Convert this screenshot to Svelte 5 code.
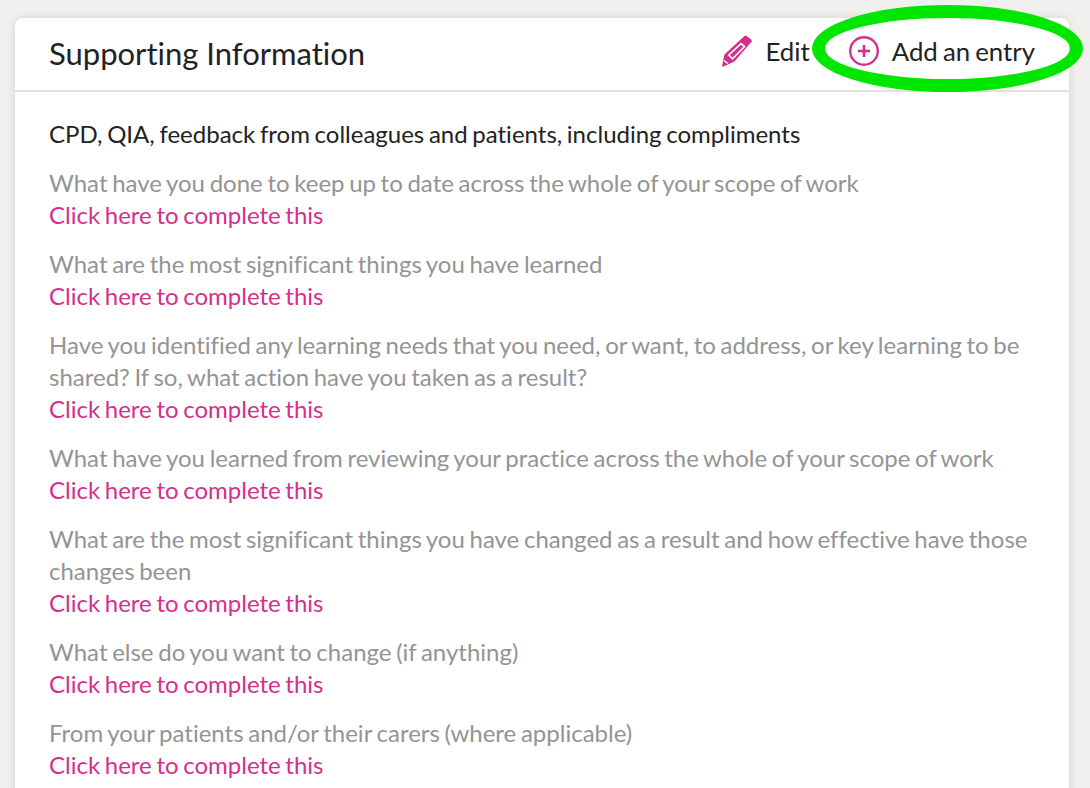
<script>
    const sections = [
        ['What have you done to keep up to date across the whole of your scope of work'],
        ['What are the most significant things you have learned'],
        ['Have you identified any learning needs that you need, or want, to address, or key learning to be shared? If so, what action have you taken as a result?'],
        ['What have you learned from reviewing your practice across the whole of your scope of work'],
        ['What are the most significant things you have changed as a result and how effective have those changes been'],
        ['What else do you want to change (if anything)'],
        ['From your patients and/or their carers (where applicable)']
    ];
</script>

<div class="page">
    <div class="card">
        <header class="head">
            <h2>Supporting Information</h2>
            <div class="actions">
                <span class="action edit">
                    <svg width="30" height="32" viewBox="0 0 30 32">
                        <path d="M22.5 1 C23.2 .5 24 .5 24.7 1 L29.2 4.6 C30 5.3 30.1 6.3 29.4 7.1 L12.4 26.4 L1.6 31.6 C.8 32 0 31.4 .2 30.5 L2.4 19.6 Z" fill="#d42f8c"/>
                        <path d="M6.8 20 L19 8.6 L22.6 11.6 L10.4 23.8 Z" fill="none" stroke="#fff" stroke-width="1.6"/>
                        <path d="M2.2 25.4 L5.6 28.6" stroke="#fff" stroke-width="1.4" fill="none"/>
                    </svg>
                    Edit
                </span>
                <span class="action add">
                    <svg width="30" height="30" viewBox="0 0 30 30">
                        <circle cx="15" cy="15" r="13.8" fill="none" stroke="#d42f8c" stroke-width="2.4"/>
                        <path d="M9 15 H21 M15 9 V21" stroke="#d42f8c" stroke-width="2.6" fill="none"/>
                    </svg>
                    Add an entry
                </span>
            </div>
        </header>
        <div class="body">
            <p class="lead">CPD, QIA, feedback from colleagues and patients, including compliments</p>
            {#each sections as s}
                <div class="item">
                    <div class="q">{s[0]}</div>
                    <div class="link">Click here to complete this</div>
                </div>
            {/each}
        </div>
    </div>
    <div class="ring"></div>
</div>

<style>
    :global(body) {
        background: #f1f0ee;
    }
    .page {
        position: relative;
        height: 788px;
        overflow: hidden;
        padding: 18px 21px 0 15px;
        box-sizing: border-box;
        font-family: Lato, sans-serif;
        font-size: 24px;
        line-height: 32px;
        color: #222;
        word-spacing: -1.5px;
        font-variant-ligatures: none;
    }
    .card {
        background: #fff;
        border-radius: 8px 8px 0 0;
        box-shadow: 0 0 10px rgba(0, 0, 0, 0.12);
        height: 900px;
    }
    .head {
        display: flex;
        justify-content: space-between;
        align-items: center;
        height: 72px;
        padding: 0 34px;
        border-bottom: 2px solid #e2e1df;
    }
    h2 {
        margin: 0 0 2px;
        font-size: 31px;
        font-weight: 400;
        word-spacing: 0;
    }
    .actions {
        display: flex;
        gap: 39px;
        font-size: 25.8px;
        margin-bottom: 6px;
    }
    .action {
        display: flex;
        align-items: center;
        gap: 13px;
    }
    .body {
        padding: 26px 34px 0;
    }
    .lead {
        margin: 0 0 17px;
    }
    .item {
        margin-bottom: 17px;
    }
    .q {
        color: #949494;
    }
    .link {
        color: #d42f8c;
    }
    .ring {
        position: absolute;
        left: 812px;
        top: 5px;
        width: 271px;
        height: 87px;
        box-sizing: border-box;
        border: 13px solid #00e600;
        border-radius: 50%;
    }
</style>
